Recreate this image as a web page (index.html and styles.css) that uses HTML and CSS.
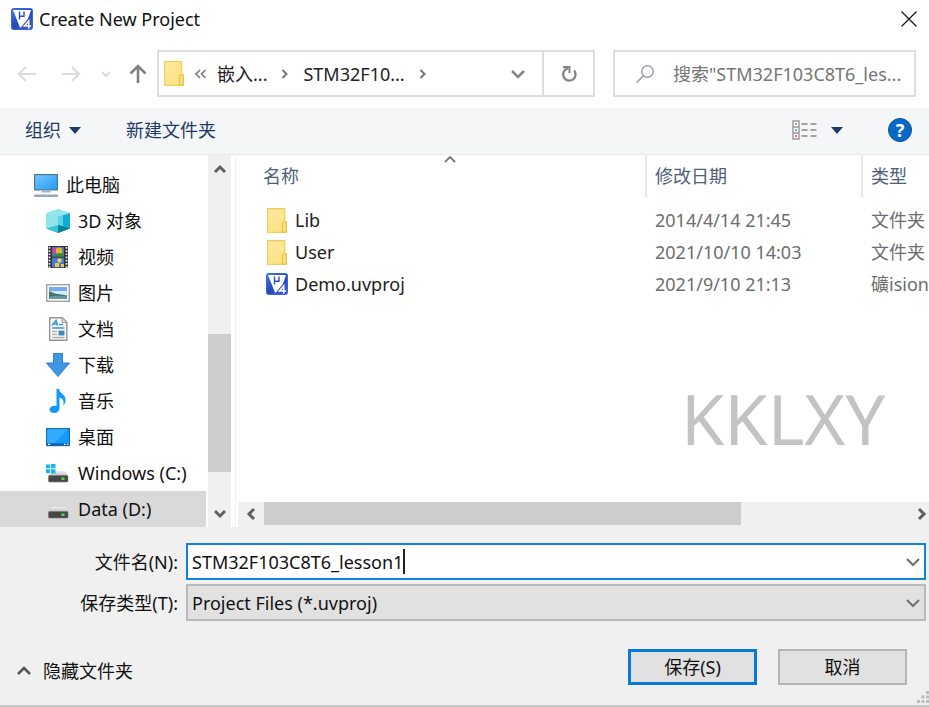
FILE: index.html
```html
<!DOCTYPE html>
<html lang="zh-CN">
<head>
<meta charset="utf-8">
<title>Create New Project</title>
<link rel="stylesheet" href="styles.css">
</head>
<body>
<svg class="defs" aria-hidden="true">
  <defs>
    <linearGradient id="gold" x1="0" y1="0" x2="1" y2="1"><stop offset="0" stop-color="#ffe9a2"/><stop offset="1" stop-color="#ffe07a"/></linearGradient>
    <linearGradient id="sky" x1="0" y1="0" x2="1" y2="1"><stop offset="0" stop-color="#7cc6ff"/><stop offset=".5" stop-color="#4bb0fb"/><stop offset="1" stop-color="#229af0"/></linearGradient>
    <linearGradient id="keil" x1="0" y1="0" x2="1" y2="1"><stop offset="0" stop-color="#4a78e4"/><stop offset=".5" stop-color="#2747bd"/><stop offset="1" stop-color="#3f6be0"/></linearGradient>
    <linearGradient id="drive" x1="0" y1="0" x2="0" y2="1"><stop offset="0" stop-color="#f0f0f0"/><stop offset="1" stop-color="#bdbdbd"/></linearGradient>
    <symbol id="i-keil" viewBox="0 0 22 22">
      <rect x=".5" y=".5" width="21" height="21" rx="2" fill="url(#keil)" stroke="#3b66d8"/>
      <path d="M2 2h18l-6 17.500H9z" fill="#fff"/>
      <path d="M8.500 3.500v8M8.500 8.200h4.500M13 3.500v5.500" fill="none" stroke="#2a4dc4" stroke-width="1.400"/>
      <path d="M17.700 20.500V13l-4.200 5h6.500" fill="none" stroke="#2747bd" stroke-width="3.600"/>
      <path d="M17.700 20.500V13l-4.200 5h6.500" fill="none" stroke="#fff" stroke-width="1.700"/>
    </symbol>
    <symbol id="i-folder" viewBox="0 0 20 25">
      <path d="M.7.700h17v13h1.600v10.600H.7z" fill="url(#gold)" stroke="#f0cc58" stroke-width="1.200"/>
      <path d="M15.600 24V15q0-1 1-1h1.500q1 0 1 1v9z" fill="#ffe48c" stroke="#e8bf45" stroke-width="1.200"/>
    </symbol>
    <symbol id="i-drive" viewBox="0 0 24 24">
      <path d="M5.500 10h14l2.500 5H3z" fill="url(#drive)"/>
      <rect x="2.500" y="14.500" width="19.500" height="6.500" rx="1" fill="#474747" stroke="#777" stroke-width=".6"/>
      <rect x="15.500" y="16.500" width="3" height="2.500" fill="#4be04b"/>
    </symbol>
  </defs>
</svg>

<header class="titlebar">
  <svg class="app-icon"><use href="#i-keil"/></svg>
  <h1>Create New Project</h1>
  <button class="close" aria-label="关闭"><svg width="16" height="16"><path d="M.5.500l15 15M15.500.500l-15 15" stroke="#111" stroke-width="1.200"/></svg></button>
</header>

<nav class="navbar">
  <div class="history">
    <button class="h-back" aria-label="后退"><svg width="20" height="18"><path d="M19 9H2M9 2L2 9l7 7" fill="none" stroke="#dcdcdc" stroke-width="2.200"/></svg></button>
    <button class="h-next" aria-label="前进"><svg width="20" height="18"><path d="M1 9h17M11 2l7 7-7 7" fill="none" stroke="#dcdcdc" stroke-width="2.200"/></svg></button>
    <button class="h-recent" aria-label="最近"><svg width="10" height="8"><path d="M1 2l4 4 4-4" fill="none" stroke="#dcdcdc" stroke-width="2"/></svg></button>
    <button class="h-up" aria-label="上移"><svg width="18" height="20"><path d="M9 19V2M1.500 9.500L9 2l7.500 7.500" fill="none" stroke="#808080" stroke-width="2.600"/></svg></button>
  </div>
  <div class="address">
    <div class="crumbs">
      <svg class="folder"><use href="#i-folder"/></svg>
      <svg class="sep-back" width="13" height="10"><path d="M6 1L2 5l4 4M11.500 1l-4 4 4 4" fill="none" stroke="#777" stroke-width="1.600"/></svg>
      <button>嵌入...</button>
      <svg class="sep" width="8" height="12"><path d="M1.500 2l4 4-4 4" fill="none" stroke="#777" stroke-width="2"/></svg>
      <button>STM32F10...</button>
      <svg class="sep" width="8" height="12"><path d="M1.500 2l4 4-4 4" fill="none" stroke="#777" stroke-width="2"/></svg>
    </div>
    <button class="drop" aria-label="以前的位置"><svg width="14" height="10"><path d="M1 2l6 6 6-6" fill="none" stroke="#858585" stroke-width="2.600"/></svg></button>
    <button class="refresh" aria-label="刷新"><svg width="18" height="18"><path d="M14.200 5.500A6.200 6.200 0 1 1 5 5L8 3" fill="none" stroke="#858585" stroke-width="2.300"/><path d="M3 2h6.500v6" fill="none" stroke="#858585" stroke-width="2"/></svg></button>
  </div>
  <label class="search">
    <svg width="20" height="20"><circle cx="12.500" cy="7.500" r="5.800" fill="none" stroke="#a19aa8" stroke-width="1.400"/><path d="M8.500 11.800L1.500 18.500" stroke="#a19aa8" stroke-width="1.600"/></svg>
    <input type="text" aria-label="搜索" placeholder='搜索"STM32F103C8T6_les...'>
  </label>
</nav>

<div class="toolbar">
  <button>组织 <svg width="12" height="7"><path d="M0 0h12L6 7z" fill="#1e3a66"/></svg></button>
  <button>新建文件夹</button>
  <button class="view" aria-label="更改视图">
    <svg width="25" height="20"><path d="M1 1h6v18H1zM1 7h6M1 13h6" fill="#fff" stroke="#999" stroke-width="1.400"/><path d="M3 4h2" stroke="#5a9a6a" stroke-width="1.500"/><path d="M3 10h2" stroke="#3c87ff" stroke-width="1.500"/><path d="M3 16h2" stroke="#e33" stroke-width="1.500"/><path d="M9.500 4h6M18.500 4h6M9.500 10h6M18.500 10h6M9.500 16h6M18.500 16h6" stroke="#888" stroke-width="1.400"/></svg>
    <svg width="12" height="7"><path d="M0 0h12L6 7z" fill="#1e3a66"/></svg>
  </button>
  <button class="help" aria-label="帮助">?</button>
</div>

<main class="browser">
  <aside class="sidebar">
    <ul class="tree">
      <li class="root"><svg viewBox="0 0 24 24"><rect x=".6" y="1.600" width="22.800" height="15.300" fill="url(#sky)" stroke="#4c7896" stroke-width="1.200"/><path d="M8 18h8l1 1.500H7z" fill="#9fb4c8"/><rect x="0" y="21.500" width="24" height="2.500" rx="1" fill="#93a8c0"/></svg>此电脑</li>
      <li><svg viewBox="0 0 24 24"><path d="M12 0l12 4-12 5L0 4z" fill="#8fe6ee"/><path d="M0 4l12 4v16L0 19.500z" fill="#8ee4ec"/><path d="M12 8l12-4v15.500L12 24z" fill="#12abd6"/><path d="M12 8l5-1.700V17l-5-1z" fill="#5dd3e4"/><path d="M12 16l12 3.500L12 24z" fill="#0a7f9a"/><path d="M0 19.500L12 16v8z" fill="#37c3d6"/></svg>3D 对象</li>
      <li><svg viewBox="0 0 24 24"><path d="M2 1h20v22H2z" fill="#333"/><path d="M3.500 2v21M20.500 2v21" stroke="#e8e8e8" stroke-width="1.800" stroke-dasharray="1.700 1.500"/><path d="M6 2h12v9.500H6z" fill="#4a74c8"/><path d="M6 12.700h12v9.800H6z" fill="#3f78e0"/><circle cx="13" cy="6" r="3.400" fill="#e2b52c"/><path d="M6 3h4v5H6z" fill="#c74a9a"/><path d="M8 10l5-2 5 1v2.500H7z" fill="#3d8d3e"/><circle cx="13.500" cy="15.500" r="2.200" fill="#ffd32e"/><path d="M9 18h4v4H9zM15 19h3v3h-3z" fill="#f4ca30"/></svg>视频</li>
      <li><svg viewBox="0 0 24 24"><rect x=".7" y="3.700" width="22.600" height="16.600" fill="#fff" stroke="#a2a2a2" stroke-width="1.400"/><path d="M3 6h18v12H3z" fill="#75aaf4"/><path d="M3 10h18v5H3z" fill="#d6eafa"/><path d="M3 10l6 2.500 12 2V18H3z" fill="#47756a"/><path d="M3 16q8-2 18-.5V18H3z" fill="#5d9aaa"/></svg>图片</li>
      <li><svg viewBox="0 0 24 24"><path d="M3.700.700h12.600l4.500 4.500v18.100H3.700z" fill="#fff" stroke="#929292" stroke-width="1.400"/><path d="M16 1v4.500h4.500" fill="#ddd" stroke="#929292"/><path d="M6 8.500l4-5 1.500 5M8 7h3" fill="none" stroke="#3996d8" stroke-width="1.600"/><path d="M13 7.500h4M6 11h12.500" stroke="#3996d8" stroke-width="1.700"/><path d="M6 14.500h5M6 17.500h5M6 20.500h12.500" stroke="#aaa" stroke-width="1.400"/><path d="M12.500 13.500h6v5h-6z" fill="#4389be"/></svg>文档</li>
      <li><svg viewBox="0 0 24 24"><path d="M7.500.500h9V10h7L12 23.500.500 10h7z" fill="#3e96e4" stroke="#2f80cb" stroke-width="1"/></svg>下载</li>
      <li><svg viewBox="0 0 24 24"><path d="M10.500 0h2.700c.5 5 7 5.500 6.300 11.500-.3 2.500-1.200 4-2.300 5 1.200-4.500-.3-7-3.700-8V19c0 3-2.500 5-5.500 5S3.500 22.400 3.500 20.500c0-2.500 3.500-4.700 7-3.500z" fill="#0d9bfb"/></svg>音乐</li>
      <li><svg viewBox="0 0 24 24"><rect x=".6" y="3.600" width="22.800" height="17" fill="#149bfa" stroke="#0d6fbd" stroke-width="1.200"/><path d="M1.200 4.200h20L9 18H1.200z" fill="#35abff"/><path d="M1 19.400h22" stroke="#125f9f" stroke-width="2"/><path d="M2 19.400h2M18 19.400h1.500M21 19.400h1.500" stroke="#fff" stroke-width="1.200"/></svg>桌面</li>
      <li><svg viewBox="0 0 24 24"><use href="#i-drive" width="24" height="24"/><path d="M0 3.500h4v3.800H0zM5 3h4.500v4.300H5zM0 8.300h4V12H0zM5 8.300h4.500v4.200H5z" fill="#14b5ee"/></svg>Windows (C:)</li>
      <li class="current"><svg><use href="#i-drive"/></svg>Data (D:)</li>
    </ul>
    <div class="vscroll">
      <svg width="14" height="10"><path d="M2 8l5-5 5 5" fill="none" stroke="#606060" stroke-width="3"/></svg>
      <div class="vtrack"><div class="vthumb"></div></div>
      <svg width="14" height="10"><path d="M2 2l5 5 5-5" fill="none" stroke="#606060" stroke-width="3"/></svg>
    </div>
  </aside>

  <section class="files">
    <svg class="sort" width="12" height="8"><path d="M1 7l5-5 5 5" fill="none" stroke="#777" stroke-width="1.800"/></svg>
    <table>
      <colgroup><col><col class="c-date"><col class="c-type"></colgroup>
      <thead><tr><th><span>名称</span></th><th><span>修改日期</span></th><th><span>类型</span></th></tr></thead>
      <tbody>
        <tr><td><div class="name"><svg class="folder"><use href="#i-folder"/></svg>Lib</div></td><td>2014/4/14 21:45</td><td>文件夹</td></tr>
        <tr><td><div class="name"><svg class="folder"><use href="#i-folder"/></svg>User</div></td><td>2021/10/10 14:03</td><td>文件夹</td></tr>
        <tr><td><div class="name"><svg class="app-icon"><use href="#i-keil"/></svg>Demo.uvproj</div></td><td>2021/9/10 21:13</td><td>礦ision</td></tr>
      </tbody>
    </table>
    <div class="watermark">KKLXY</div>
    <div class="hscroll">
      <svg width="10" height="14"><path d="M8 2L3 7l5 5" fill="none" stroke="#606060" stroke-width="3"/></svg>
      <div class="htrack"><div class="hthumb"></div></div>
      <svg width="10" height="14"><path d="M2 2l5 5-5 5" fill="none" stroke="#606060" stroke-width="3"/></svg>
    </div>
  </section>
</main>

<footer class="panel">
  <div class="fields">
    <label for="filename">文件名(N):</label>
    <div class="combo active">
      <input id="filename" type="text" value="STM32F103C8T6_lesson1"><span class="caret"></span>
      <svg class="chev" width="14" height="10"><path d="M1 2l6 6 6-6" fill="none" stroke="#707070" stroke-width="2"/></svg>
    </div>
    <label for="filetype">保存类型(T):</label>
    <div class="combo">
      <select id="filetype"><option>Project Files (*.uvproj)</option></select>
      <svg class="chev" width="14" height="10"><path d="M1 2l6 6 6-6" fill="none" stroke="#707070" stroke-width="2"/></svg>
    </div>
  </div>
  <div class="actions">
    <button class="hide"><svg width="14" height="10"><path d="M1 8l6-6 6 6" fill="none" stroke="#555" stroke-width="2.600"/></svg>隐藏文件夹</button>
    <button class="btn primary">保存(S)</button>
    <button class="btn">取消</button>
  </div>
  <svg class="grip" width="12" height="12"><path d="M9 0h3v3H9zM4.500 4.500h3v3h-3zM9 4.500h3v3H9zM0 9h3v3H0zM4.500 9h3v3h-3zM9 9h3v3H9z" fill="#bdbdbd"/></svg>
</footer>
</body>
</html>
```

FILE: styles.css
```css
* { box-sizing: border-box; }

body {
  margin: 0;
  min-height: 100vh;
  display: flex;
  flex-direction: column;
  background: #fff;
  color: #111;
  font: 18px/24px "Noto Sans", "Noto Sans CJK SC", sans-serif;
  overflow: hidden;
}

svg { display: block; flex: none; }
.defs { position: absolute; width: 0; height: 0; }

button, input, select {
  font: inherit;
  color: inherit;
  margin: 0;
  padding: 0;
  border: 0;
  background: none;
  outline: none;
}

button { white-space: nowrap; }
.app-icon { width: 22px; height: 22px; }
.folder { width: 20px; height: 25px; }

.titlebar {
  display: flex;
  align-items: center;
  gap: 6px;
  height: 38px;
  padding: 0 12px 0 11px;
}
.titlebar h1 { margin: 0; font-size: 18px; font-weight: 400; }
.close { margin-left: auto; }

.navbar {
  display: grid;
  grid-template-columns: 122px minmax(0, 438fr) minmax(0, 303fr);
  column-gap: 18px;
  padding: 12px 13px 11px 17px;
}
.history { display: flex; align-items: center; }
.h-next { margin-left: 24px; }
.h-recent { margin-left: 20px; }
.h-up { margin-left: 18px; }

.address {
  display: flex;
  height: 47px;
  border: 2px solid #dedede;
}
.crumbs {
  display: flex;
  flex: 1;
  align-items: center;
  gap: 14px;
  padding-left: 5px;
  color: #222;
}
.crumbs .sep-back { margin: 0 -4px; }
.drop { display: flex; align-items: center; padding: 0 17px; }
.refresh {
  width: 51px;
  display: flex;
  align-items: center;
  justify-content: center;
  border-left: 2px solid #dedede;
}

.search {
  display: flex;
  align-items: center;
  gap: 18px;
  padding: 0 6px 0 20px;
  border: 2px solid #dedede;
}
.search input { flex: 1; min-width: 0; width: 0; }
.search input::placeholder { color: #757575; opacity: 1; }

.toolbar {
  display: flex;
  align-items: center;
  gap: 45px;
  height: 47px;
  padding: 0 17px 2px 25px;
  background: #f4f6f8;
  border-bottom: 1px solid #e6e8eb;
  color: #1e3a66;
}
.toolbar button { display: flex; align-items: center; gap: 8px; }
.toolbar .view { margin-left: auto; gap: 14px; }
.toolbar .help {
  justify-content: center;
  width: 24px;
  height: 24px;
  border-radius: 50%;
  border: 1px solid #0b4f94;
  background: #0a68c8;
  color: #fff;
  font-weight: 700;
}

.browser {
  display: grid;
  grid-template-columns: 236px minmax(0, 1fr);
  height: 372px;
}

.sidebar {
  display: grid;
  grid-template-columns: minmax(0, 1fr) 23px;
  gap: 2px;
  padding-right: 4px;
  border-right: 1px solid #f0f0f0;
}
.tree { list-style: none; margin: 0; padding: 12px 0 0; }
.tree li {
  display: flex;
  align-items: center;
  gap: 8px;
  height: 36px;
  padding-left: 46px;
  white-space: nowrap;
}
.tree .root { padding-left: 34px; }
.tree .current { background: #d9d9d9; }
.tree svg { width: 24px; height: 24px; }

.vscroll {
  display: flex;
  flex-direction: column;
  align-items: center;
  padding: 9px 0 8px;
  background: #f0f0f0;
}
.vtrack { flex: 1; width: 100%; padding-top: 160px; }
.vthumb { height: 138px; background: #cdcdcd; }

.files { position: relative; display: flex; flex-direction: column; overflow: hidden; }
.sort { position: absolute; left: 208px; top: 0; }

table { width: 100%; table-layout: fixed; border-collapse: collapse; }
.c-date { width: 216px; }
.c-type { width: 68px; }
th, td { padding: 0; text-align: left; font-weight: 400; white-space: nowrap; overflow: hidden; }
th { padding-bottom: 7px; color: #4c607a; }
th span { display: block; padding: 9px 0 9px 8px; border-left: 2px solid #e8e8e8; }
th:first-child span { border-left: 0; padding-left: 27px; }
td { height: 32px; padding-left: 10px; color: #6d6d6d; }
td:first-child { padding-left: 30px; color: #222; }
.name { display: flex; align-items: center; gap: 7px; }
.name .folder { margin: 0 1px; }

.watermark {
  position: absolute;
  right: 44px;
  top: 215px;
  font-size: 70px;
  line-height: 96px;
  color: #c3c3c3;
}

.hscroll {
  display: flex;
  align-items: center;
  height: 25px;
  margin: auto 0 0 2px;
  padding: 0 2px 2px 8px;
  background: #f0f0f0;
}
.htrack { flex: 1; height: 23px; margin: 0 8px; align-self: flex-start; }
.hthumb { width: 74%; height: 100%; background: #cdcdcd; }

.panel {
  position: relative;
  flex: 1;
  background: #f0f0f0;
  border-bottom: 2px solid #c6c6c6;
}
.fields {
  display: grid;
  grid-template-columns: 178px minmax(0, 1fr);
  gap: 4px 8px;
  padding: 16px 3px 0 0;
  align-items: center;
}
.fields label { text-align: right; }
.combo {
  display: flex;
  align-items: center;
  position: relative;
  height: 37px;
  padding: 0 4px;
  border: 2px solid #b9b9b9;
  background: #e1e1e1;
}
.combo.active { background: #fff; border-color: #1283dc; }
.combo input { field-sizing: content; }
.combo select { appearance: none; flex: 1; }
.caret { width: 2px; height: 25px; background: #222; }
.chev { margin-left: auto; }

.actions {
  display: flex;
  align-items: center;
  gap: 21px;
  padding: 28px 22px 18px 17px;
}
.hide { display: flex; align-items: center; gap: 12px; margin-right: auto; padding-top: 8px; }
.btn {
  width: 129px;
  height: 36px;
  border: 2px solid #b5b5b5;
  background: #e1e1e1;
}
.btn.primary { border: 3px solid #0a78d6; }
.grip { position: absolute; right: 0; bottom: 2px; }
```
